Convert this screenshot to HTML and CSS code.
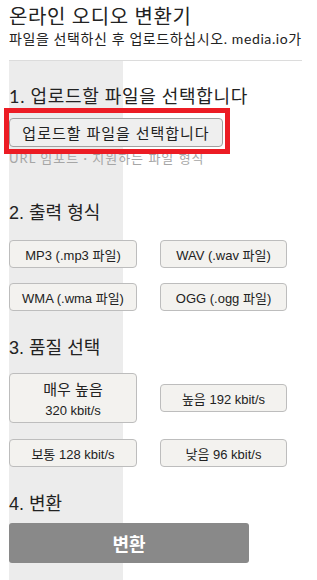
FILE: index.html
```html
<!DOCTYPE html>
<html lang="ko">
<head>
  <meta charset="UTF-8" />
  <meta name="viewport" content="width=device-width, initial-scale=1.0"/>
  <title>온라인 오디오 변환기</title>
  <link rel="stylesheet" href="styles.css">
</head>
<body>
  <div class="page">
    <h1 class="title">온라인 오디오 변환기</h1>
    <p class="subtitle">파일을 선택하신 후 업로드하십시오. media.io가</p>
    <hr class="rule">
    <div class="main">
      <h2 class="step step-first">1. 업로드할 파일을 선택합니다</h2>
      <div class="highlight">
        <button class="upload-btn">업로드할 파일을 선택합니다</button>
      </div>
      <div class="links">URL 임포트 · 지원하는 파일 형식</div>

      <h2 class="step">2. 출력 형식</h2>
      <div class="options formats">
        <button class="opt">MP3 (.mp3 파일)</button>
        <button class="opt">WAV (.wav 파일)</button>
        <button class="opt">WMA (.wma 파일)</button>
        <button class="opt">OGG (.ogg 파일)</button>
      </div>

      <h2 class="step step-q">3. 품질 선택</h2>
      <div class="options quality">
        <button class="opt opt-tall"><span class="q-name">매우 높음</span><span class="q-rate">320 kbit/s</span></button>
        <button class="opt">높음 192 kbit/s</button>
        <button class="opt">보통 128 kbit/s</button>
        <button class="opt">낮음 96 kbit/s</button>
      </div>

      <h2 class="step step-q">4. 변환</h2>
      <button class="convert-btn">변환</button>
    </div>
  </div>
</body>
</html>
```

FILE: styles.css
```css
body {
  margin: 0;
  background: #fff;
  color: #222;
  font-family: Lato, "Noto Sans CJK KR", sans-serif;
  overflow: hidden;
}
.page {
  width: 293px;
  padding: 0 15px 0 9px;
}
.title {
  margin: 0;
  padding-top: 4px;
  font-size: 20px;
  line-height: 24px;
  font-weight: normal;
  letter-spacing: 0.6px;
}
.subtitle {
  margin: 3px 0 0;
  font-size: 14px;
  line-height: 16px;
  letter-spacing: 0.6px;
  white-space: nowrap;
  overflow: hidden;
}
.rule {
  margin: 13px 0 0;
  border: none;
  border-top: 1px solid #dcdcdc;
}
.main {
  box-sizing: border-box;
  min-height: 519px;
  padding-top: 24px;
  background: linear-gradient(to right, #ececec 114px, #fff 114px);
}
.step {
  margin: 36px 0 0;
  font-family: "Liberation Sans", Arial, "Noto Sans CJK KR", sans-serif;
  font-size: 18px;
  line-height: 22px;
  font-weight: normal;
  color: #222;
}
.step-first {
  margin-top: 0;
  font-family: Lato, "Noto Sans CJK KR", sans-serif;
  letter-spacing: 0.7px;
}
.step-q { margin-top: 26px; }
.highlight {
  position: relative;
  z-index: 1;
  width: 216px;
  margin: 1px 0 0 -5px;
  padding: 5px 0 2px;
  border: 5px solid #ec1c24;
}
.upload-btn {
  display: block;
  width: 214px;
  height: 29px;
  padding: 0;
  background: #efefef;
  border: 1px solid #a0a0a0;
  border-radius: 4px;
  font-family: Lato, "Noto Sans CJK KR", sans-serif;
  font-size: 15px;
  letter-spacing: 1px;
  color: #222;
}
.links {
  margin-top: -4px;
  font-size: 13px;
  line-height: 16px;
  letter-spacing: 1px;
  color: #a6a6a6;
}
.options {
  display: grid;
  grid-template-columns: 128px 127px;
  column-gap: 23px;
  row-gap: 15px;
  align-items: center;
  margin-top: 16px;
}
.quality {
  margin-top: 14px;
  row-gap: 16px;
}
.opt {
  height: 28px;
  padding: 0;
  background: #f3f2ef;
  border: 1px solid #bdbdbd;
  border-radius: 4px;
  font-family: "Liberation Sans", Arial, "Noto Sans CJK KR", sans-serif;
  font-size: 13px;
  color: #222;
}
.opt-tall {
  height: 50px;
  display: flex;
  flex-direction: column;
  align-items: center;
  justify-content: center;
  gap: 4px;
}
.q-name { font-size: 15px; }
.convert-btn {
  display: block;
  width: 240px;
  height: 40px;
  margin-top: 8px;
  background: #898989;
  border: none;
  border-radius: 3px;
  color: #fff;
  font-family: "Liberation Sans", Arial, "Noto Sans CJK KR", sans-serif;
  font-size: 18px;
  font-weight: bold;
}
```
